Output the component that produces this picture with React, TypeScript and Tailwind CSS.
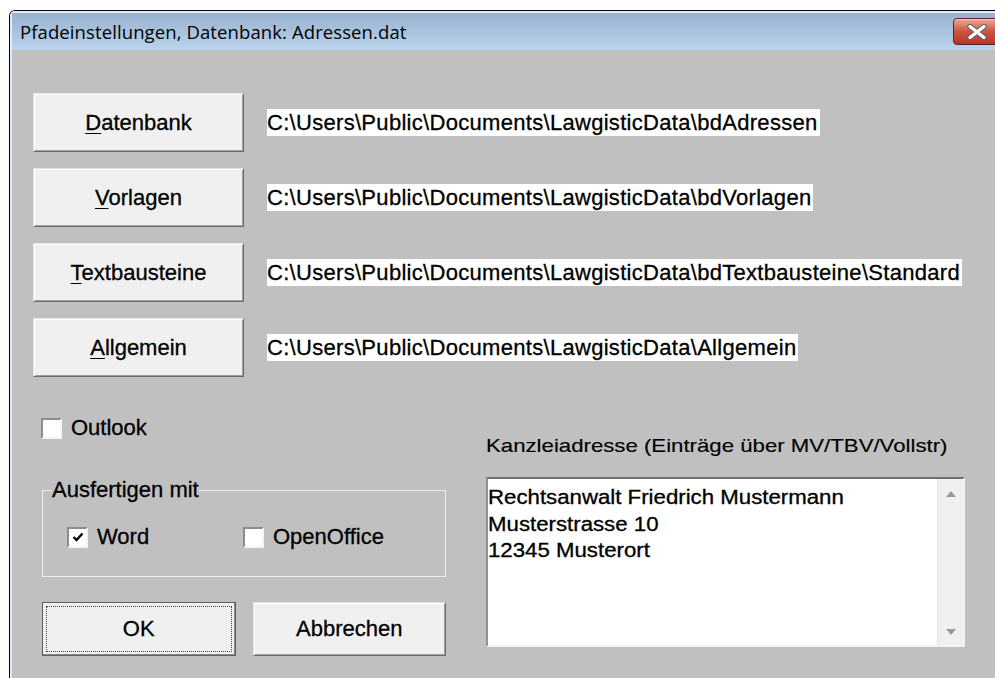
import type { ReactNode } from "react";

const sans = "font-['Liberation_Sans',Arial,sans-serif]";

const pathRows = [
  { key: "D", rest: "atenbank", path: "C:\\Users\\Public\\Documents\\LawgisticData\\bdAdressen" },
  { key: "V", rest: "orlagen", path: "C:\\Users\\Public\\Documents\\LawgisticData\\bdVorlagen" },
  { key: "T", rest: "extbausteine", path: "C:\\Users\\Public\\Documents\\LawgisticData\\bdTextbausteine\\Standard" },
  { key: "A", rest: "llgemein", path: "C:\\Users\\Public\\Documents\\LawgisticData\\Allgemein" },
];

function Check({ checked }: { checked?: boolean }) {
  return (
    <span className="flex h-[21px] w-[21px] shrink-0 items-center justify-center border-2 border-t-[#8c8c8c] border-l-[#8c8c8c] border-r-[#f4f4f4] border-b-[#f4f4f4] bg-white">
      {checked && (
        <svg width="12" height="10" viewBox="0 0 12 10">
          <path d="M1.5 5 L4.5 8 L10.5 1.5" stroke="#000" strokeWidth="2.4" fill="none" />
        </svg>
      )}
    </span>
  );
}

function CheckRow({ label, checked, className = "" }: { label: string; checked?: boolean; className?: string }) {
  return (
    <label className={`flex h-[24px] items-center gap-[9px] text-[22px] leading-[24px] ${className}`}>
      <Check checked={checked} />
      <span>{label}</span>
    </label>
  );
}

function PushButton({ children, className = "" }: { children: ReactNode; className?: string }) {
  return (
    <button className={`flex items-center justify-center border border-t-[#e4e4e4] border-l-[#e4e4e4] border-r-[#6c6c6c] border-b-[#6c6c6c] bg-[#f0f0f0] text-[22px] leading-[24px] text-black shadow-[inset_1px_1px_0_#ffffff,inset_-1px_-1px_0_#a0a0a0] ${className}`}>
      {children}
    </button>
  );
}

export default function App() {
  return (
    <div className={`h-[678px] w-[995px] overflow-hidden bg-white ${sans}`}>
      {/* dialog frame */}
      <div className="ml-[9px] mt-[10px] flex h-[700px] w-[1003px] flex-col rounded-tl-[6px] border-l border-t border-black">
        <div className="flex flex-1 flex-col rounded-tl-[5px] border-l-2 border-t-2 border-[#e2ebf6]">
          {/* title bar */}
          <div className="flex h-[37px] items-start bg-linear-to-b from-[#97b2d0] to-[#bbd3ec]">
            <span className="mt-[6.5px] flex-1 pl-[8px] font-['Open_Sans',sans-serif] text-[18.5px] leading-[24px] tracking-[0.1px] text-black">
              Pfadeinstellungen, Datenbank: Adressen.dat
            </span>
            <div className="mr-[12px] mt-[5px] flex h-[27px] w-[47px] items-center justify-center rounded-[4px] border border-[#5b2424] bg-linear-to-b from-[#e6a896] via-[#cc5440] to-[#b3372a] shadow-[inset_0_1px_0_#f2c6b8]">
              <svg width="22" height="16" viewBox="0 0 22 16">
                <path d="M4 2.5 L18 13.5 M18 2.5 L4 13.5" stroke="#5e5e5e" strokeWidth="5.4" strokeLinecap="round" fill="none" />
                <path d="M4 2.5 L18 13.5 M18 2.5 L4 13.5" stroke="#ffffff" strokeWidth="3.4" strokeLinecap="round" fill="none" />
              </svg>
            </div>
          </div>

          {/* body */}
          <div className="flex-1 bg-[#c0c0c0] pl-[21px] pt-[43px] text-black [-webkit-text-stroke:0.3px_#000]">
            <div className="flex flex-col gap-[16px]">
              {pathRows.map((row) => (
                <div key={row.key} className="flex items-center gap-[23px]">
                  <PushButton className="h-[59px] w-[211px]">
                    <span>
                      <span className="underline decoration-1 underline-offset-[3px]">{row.key}</span>
                      {row.rest}
                    </span>
                  </PushButton>
                  <span className="bg-white pr-[2px] text-[22px] leading-[27px] tracking-[0.3px]">{row.path}</span>
                </div>
              ))}
            </div>

            <div className="flex">
              {/* left column */}
              <div className="ml-[8px] flex w-[405px] flex-col">
                <CheckRow label="Outlook" className="mt-[39px]" />

                <fieldset className="ml-px mt-[38px] w-[404px] border border-[#eeeeee] pb-[27px]">
                  <legend className="ml-[9px] text-[22px] leading-[24px]">Ausfertigen mit</legend>
                  <div className="mt-[23px] flex pl-[24px]">
                    <CheckRow label="Word" checked className="w-[176px]" />
                    <CheckRow label="OpenOffice" />
                  </div>
                </fieldset>

                <div className="ml-px mt-[25px] flex gap-[17px]">
                  <button className="flex h-[54px] w-[194px] border border-[#5f5f5f] bg-[#f0f0f0] p-px text-[22px] leading-[24px] shadow-[inset_-1px_-1px_0_#8a8a8a]">
                    <span className="m-[2px] flex flex-1 items-center justify-center border border-dotted border-[#444]">OK</span>
                  </button>
                  <PushButton className="h-[54px] w-[194px]">Abbrechen</PushButton>
                </div>
              </div>

              {/* right column */}
              <div className="ml-[40px] flex flex-col">
                <span className="mt-[57px] h-[24px] text-[18.5px] leading-[24px] [-webkit-text-stroke:0.15px_#000]">
                  <span className="inline-block origin-left scale-x-[1.2] whitespace-nowrap">
                    Kanzleiadresse (Einträge über MV/TBV/Vollstr)
                  </span>
                </span>
                <div className="mt-[19px] flex h-[170px] w-[479px] border-2 border-t-[#707070] border-l-[#909090] border-r-[#f2f2f2] border-b-[#f2f2f2] bg-white">
                  <div className="flex-1 pt-[5px] text-[19.5px] leading-[26.5px]">
                    {["Rechtsanwalt Friedrich Mustermann", "Musterstrasse 10", "12345 Musterort"].map((line) => (
                      <div key={line} className="h-[26.5px]">
                        <span className="inline-block origin-left scale-x-[1.14] whitespace-nowrap">{line}</span>
                      </div>
                    ))}
                  </div>
                  {/* vertical scrollbar */}
                  <div className="flex w-[26px] flex-col items-center justify-between border-l border-[#e6e6e6] bg-[#f0f0f0] pb-[10px] pt-[12px]">
                    <svg width="10" height="6" viewBox="0 0 10 6">
                      <path d="M5 0 L10 6 L0 6 Z" fill="#9a9a9a" />
                    </svg>
                    <svg width="10" height="6" viewBox="0 0 10 6">
                      <path d="M0 0 L10 0 L5 6 Z" fill="#9a9a9a" />
                    </svg>
                  </div>
                </div>
              </div>
            </div>
          </div>
        </div>
      </div>
    </div>
  );
}
